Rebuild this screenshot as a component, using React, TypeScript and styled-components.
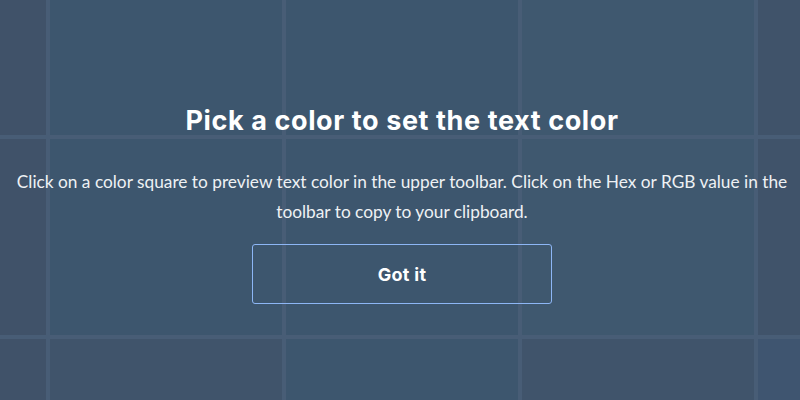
import React from 'react';
import styled, { createGlobalStyle } from 'styled-components';

const GlobalStyle = createGlobalStyle`
    html, body {
        margin: 0;
        padding: 0;
        width: 800px;
        height: 400px;
        overflow: hidden;
        background: #3d566e;
    }
`;

const Page = styled.div`
    position: relative;
    width: 800px;
    height: 400px;
    overflow: hidden;
`;

const Swatches = styled.div`
    display: grid;
    grid-template-columns: repeat(5, 232px);
    grid-auto-rows: 196px;
    gap: 4px;
    margin: -61px 0 0 -186px;
    background: #485d76;
    width: max-content;
`;

const Swatch = styled.div<{ $tint: string }>`
    background: ${(p) => p.$tint};
`;

const Overlay = styled.div`
    position: absolute;
    inset: 0;
    display: flex;
    flex-direction: column;
    align-items: center;
    justify-content: center;
    padding: 9px 0 0 4px;
    text-align: center;
    color: #ffffff;
`;

const Title = styled.h2`
    margin: 0 0 30px;
    font-family: Inter, 'Open Sans', sans-serif;
    font-weight: 700;
    font-size: 27px;
    line-height: 32px;
    letter-spacing: 0.6px;
`;

const Body = styled.p`
    margin: 0 0 17px;
    padding: 0 10px;
    font-family: Lato, 'Open Sans', sans-serif;
    font-size: 17.3px;
    line-height: 30px;
    color: #eef1f4;
`;

const Button = styled.button`
    width: 300px;
    height: 60px;
    border: 1px solid #8db6f5;
    border-radius: 3px;
    background: transparent;
    color: #ffffff;
    font-family: Inter, 'Open Sans', sans-serif;
    font-weight: 700;
    font-size: 18px;
    letter-spacing: 0.3px;
    cursor: pointer;
`;

const tints = [
    ['#405269', '#3d566e', '#3d566e', '#3f586f', '#40536a'],
    ['#405269', '#3d566e', '#3d566e', '#3f586f', '#40536a'],
    ['#405269', '#40546b', '#3d566e', '#40546b', '#3f5570'],
];

const App = () => {
    return (
        <Page>
            <GlobalStyle />
            <Swatches>
                {tints.flat().map((t, i) => (
                    <Swatch key={i} $tint={t} />
                ))}
            </Swatches>
            <Overlay>
                <Title>Pick a color to set the text color</Title>
                <Body>
                    Click on a color square to preview text color in the upper toolbar. Click on the Hex or
                    RGB value in the toolbar to copy to your clipboard.
                </Body>
                <Button>Got it</Button>
            </Overlay>
        </Page>
    );
};

export default App;
